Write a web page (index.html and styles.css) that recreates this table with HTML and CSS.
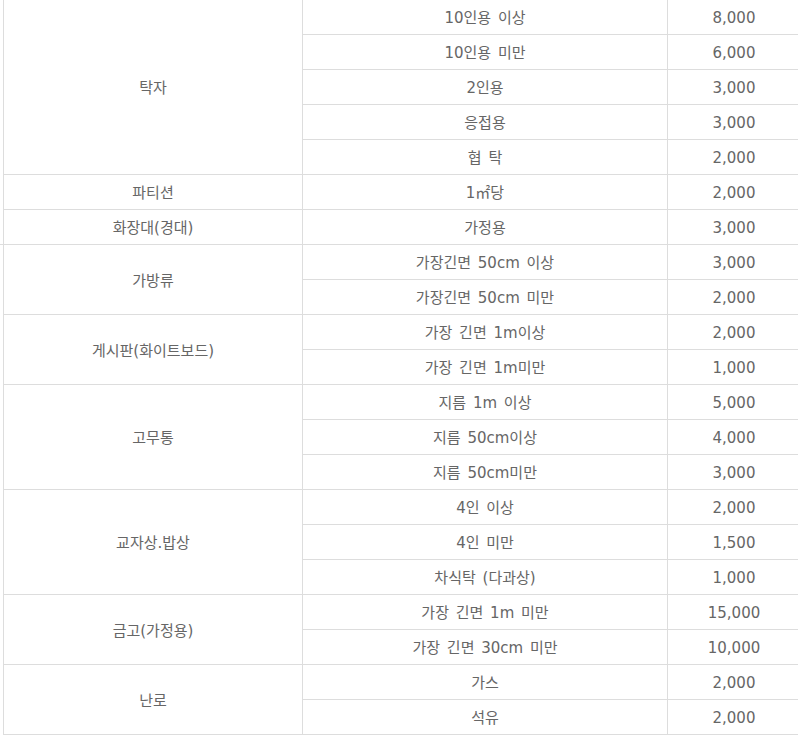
FILE: index.html
```html
<!DOCTYPE html>
<html lang="ko">
<head>
<meta charset="utf-8">
<link rel="stylesheet" href="styles.css">
</head>
<body>
<div class="wrap">
<table class="fee">
<colgroup><col class="c1"><col class="c2"><col class="c3"></colgroup>
<tbody>
<tr><td rowspan="5">탁자</td><td>10인용 이상</td><td>8,000</td></tr>
<tr><td>10인용 미만</td><td>6,000</td></tr>
<tr><td>2인용</td><td>3,000</td></tr>
<tr><td>응접용</td><td>3,000</td></tr>
<tr><td>협 탁</td><td>2,000</td></tr>
<tr><td>파티션</td><td>1㎡당</td><td>2,000</td></tr>
<tr><td class="mark">화장대(경대)</td><td>가정용</td><td>3,000</td></tr>
<tr><td rowspan="2">가방류</td><td>가장긴면 50cm 이상</td><td>3,000</td></tr>
<tr><td>가장긴면 50cm 미만</td><td>2,000</td></tr>
<tr><td rowspan="2">게시판(화이트보드)</td><td>가장 긴면 1m이상</td><td>2,000</td></tr>
<tr><td>가장 긴면 1m미만</td><td>1,000</td></tr>
<tr><td rowspan="3">고무통</td><td>지름 1m 이상</td><td>5,000</td></tr>
<tr><td>지름 50cm이상</td><td>4,000</td></tr>
<tr><td>지름 50cm미만</td><td>3,000</td></tr>
<tr><td rowspan="3">교자상.밥상</td><td>4인 이상</td><td>2,000</td></tr>
<tr><td>4인 미만</td><td>1,500</td></tr>
<tr><td>차식탁 (다과상)</td><td>1,000</td></tr>
<tr><td rowspan="2">금고(가정용)</td><td>가장 긴면 1m 미만</td><td>15,000</td></tr>
<tr><td>가장 긴면 30cm 미만</td><td>10,000</td></tr>
<tr><td rowspan="2">난로</td><td>가스</td><td>2,000</td></tr>
<tr><td>석유</td><td>2,000</td></tr>
</tbody>
</table>
</div>
</body>
</html>
```
FILE: styles.css
```css
html, body {
  margin: 0;
  padding: 0;
  background: #fff;
  overflow: hidden;
}
.wrap {
  width: 798px;
  height: 735px;
  overflow: hidden;
  position: relative;
}
.fee {
  border-collapse: collapse;
  margin: -1px 0 0 3px;
  width: 797px;
  table-layout: fixed;
  font-family: "DejaVu Sans", "Noto Sans CJK KR", sans-serif;
  font-size: 15px;
  word-spacing: 2px;
  color: #666;
}
.c1 { width: 299px; }
.c2 { width: 365px; }
.c3 { width: 133px; }
.fee td {
  border: 1px solid #ddd;
  height: 32px;
  padding: 2px 0 0;
  text-align: center;
  vertical-align: middle;
  line-height: 20px;
}
.mark { position: relative; }
.mark::after {
  content: "";
  position: absolute;
  left: -4px;
  bottom: -1px;
  width: 3px;
  height: 1px;
  background: #ddd;
}
```
